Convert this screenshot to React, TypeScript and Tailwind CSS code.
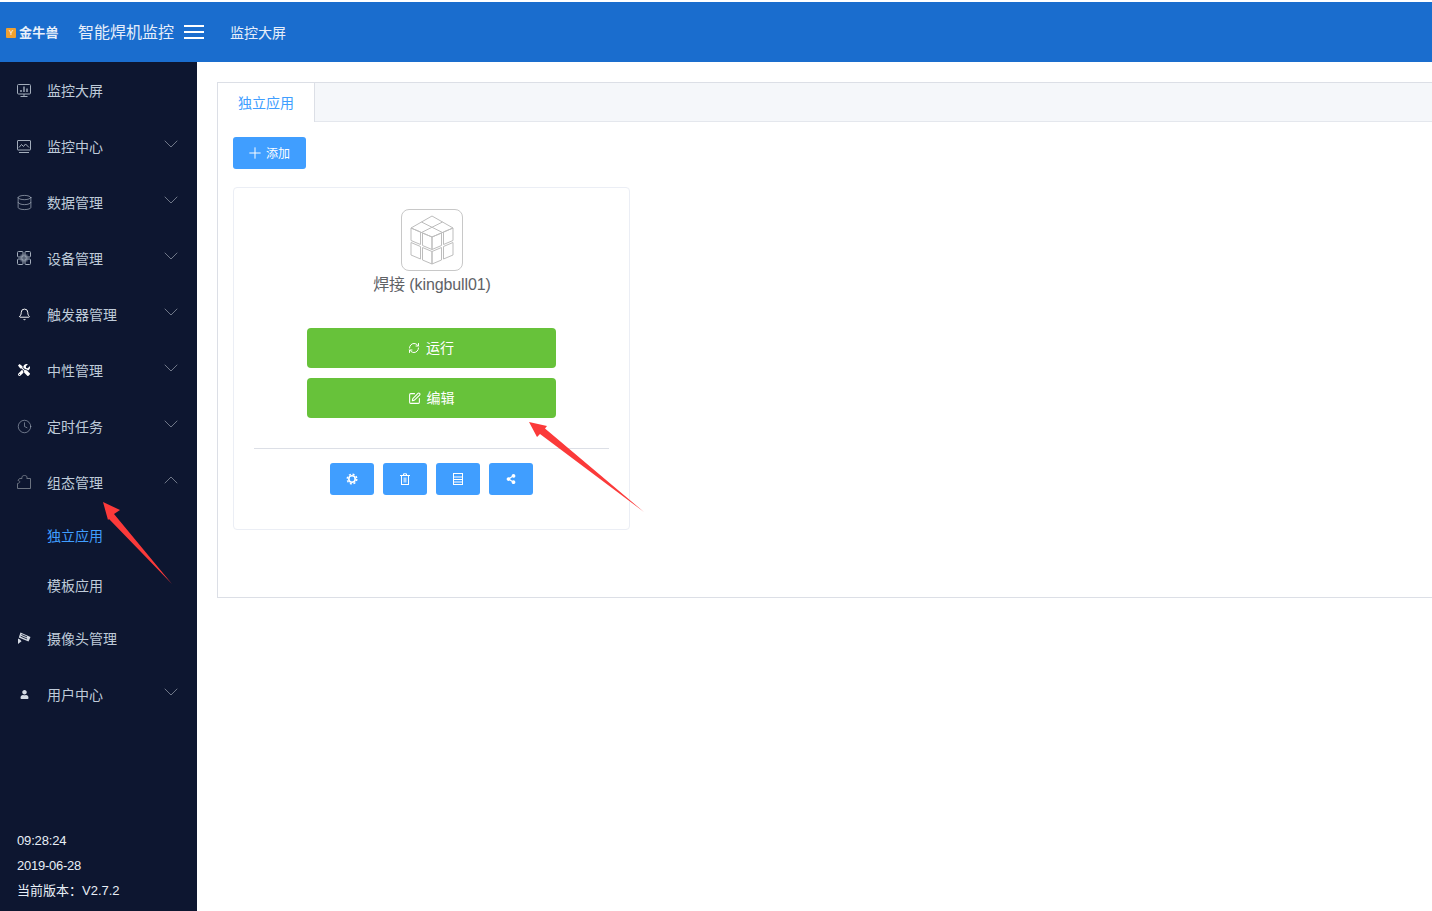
import React from 'react';
import { ChevronDown, ChevronUp, Database, Bell, Clock, RefreshCw, SquarePen, Plus } from 'lucide-react';
import { FaShareAlt, FaUser, FaTools } from 'react-icons/fa';

const ScreenIcon = () => (
  <svg width="14" height="13" viewBox="0 0 14 13" fill="none" stroke="currentColor" strokeWidth="1">
    <rect x="0.500" y="0.500" width="13" height="9.500" rx="1" />
    <path d="M3.500 12.500h7M7 10v2.500" />
    <path d="M4 8V6M7 8V2.500M10 8V4.500" strokeWidth="1.400" />
  </svg>
);

const ChartIcon = () => (
  <svg width="14" height="13" viewBox="0 0 14 13" fill="none" stroke="currentColor" strokeWidth="1">
    <rect x="0.500" y="0.500" width="13" height="9.500" rx="0.500" />
    <path d="M2 12.500h10" />
    <path d="M2 7.500l2.500-3 2 2 2-2.500 3.500 3.500" />
  </svg>
);

const GridIcon = () => (
  <svg width="14" height="14" viewBox="0 0 14 14" fill="none" stroke="currentColor" strokeWidth="1">
    <rect x="3.500" y="3.500" width="7" height="7" fill="currentColor" opacity="0.500" stroke="none" />
    <rect x="0.500" y="0.500" width="5.500" height="5.500" rx="1" />
    <rect x="8" y="0.500" width="5.500" height="5.500" rx="1" />
    <rect x="0.500" y="8" width="5.500" height="5.500" rx="1" />
    <rect x="8" y="8" width="5.500" height="5.500" rx="1" />
  </svg>
);

const PuzzleIcon = () => (
  <svg width="14" height="14" viewBox="0 0 14 14" fill="none" stroke="#6b7280" strokeWidth="1">
    <path d="M.5 13.500H13.500V3.500H9.800C10.500 1.500 9.500.5 7.500.5S4.500 1.500 5 3.500H2.500L1 5.500C3.500 6 3.500 8 .5 8.500z" />
  </svg>
);

const CameraIcon = () => (
  <svg width="14" height="13" viewBox="0 0 14 13" fill="#d5dbe4">
    <path d="M3.500 0.500L13.500 5l-2 4.500L1.800 5.500z" />
    <path d="M1 6.500l2 1 1.500 1.800L1 12z" />
    <path d="M4.500 2.500l5.500 2.400M3.600 4.200l6.500 2.800" stroke="#0d1630" strokeWidth="0.900" fill="none" />
  </svg>
);

const MenuLines = () => (
  <svg width="20" height="16" viewBox="0 0 20 16" fill="white">
    <rect y="1" width="20" height="2" />
    <rect y="7" width="20" height="2" />
    <rect y="13" width="20" height="2" />
  </svg>
);

const GearIcon = () => (
  <svg width="12" height="12" viewBox="0 0 12 12" fill="none" stroke="white">
    <circle cx="6" cy="6" r="3.200" strokeWidth="1.600" />
    <circle cx="6" cy="6" r="4.800" strokeWidth="1.400" strokeDasharray="2 1.770" />
  </svg>
);

const BinIcon = () => (
  <svg width="12" height="12" viewBox="0 0 12 12" fill="none" stroke="white" strokeWidth="1">
    <path d="M1 2.500h10M4.500 2.500V.8h3v1.700" />
    <rect x="2.500" y="2.500" width="7" height="9" />
    <rect x="4.500" y="4.500" width="3" height="5" fill="white" fillOpacity="0.600" stroke="none" />
  </svg>
);

const ListIcon = () => (
  <svg width="12" height="12" viewBox="0 0 12 12" fill="none" stroke="white" strokeWidth="1">
    <rect x="1.500" y="0.500" width="9" height="11" />
    <path d="M2 4h8M2 6.500h8M2 9h8" />
  </svg>
);

const cubeTiles = [
  'M31 7L52 19 31 28 10 19z',
  'M20.500 13L41.500 23.500M41.500 13L20.500 23.500',
  'M10 19l9.500 4v12.500l-9.500-4z',
  'M10 33.500l9.500 4V50l-9.500-4z',
  'M21.500 24l9.500 4v12.500l-9.500-4z',
  'M21.500 38.500l9.500 4V55l-9.500-4z',
  'M52 19l-9.500 4v12.500l9.500-4z',
  'M52 33.500l-9.500 4V50l9.500-4z',
  'M40.500 24L31 28v12.500l9.500-4z',
  'M40.500 38.500L31 42.500V55l9.500-4z',
];

const CubeIcon = () => (
  <svg width="62" height="62" viewBox="0 0 62 62" fill="none" stroke="#bdbdbd" strokeWidth="1">
    {cubeTiles.map((d) => (
      <path key={d} d={d} />
    ))}
  </svg>
);

const Arrow = ({ className, viewBox, points }: { className: string; viewBox: string; points: string }) => (
  <svg className={className} viewBox={viewBox} fill="#fb3a3a">
    <polygon points={points} />
  </svg>
);

type Item = { label: string; icon: React.ReactNode; chevron?: 'down' | 'up' };

const MenuRow = ({ label, icon, chevron }: Item) => (
  <div className="h-14 flex items-center pl-[17px] pr-[14px] text-[14px] text-[#bfcbd9]">
    <span className="w-[14px] h-[16px] flex items-center justify-center text-[#a3adbb] shrink-0 -mt-0.5">{icon}</span>
    <span className="ml-[16px] flex-1">{label}</span>
    {chevron === 'down' && <ChevronDown size={24} strokeWidth={1} className="text-[#6f7788] -mt-1.5" />}
    {chevron === 'up' && <ChevronUp size={24} strokeWidth={1} className="text-[#6f7788] -mt-1.5" />}
  </div>
);

const SubRow = ({ label, active }: { label: string; active?: boolean }) => (
  <div className={`h-[50px] flex items-center pl-[47px] text-[14px] ${active ? 'text-[#409eff]' : 'text-[#bfcbd9]'}`}>
    {label}
  </div>
);

const IconButton = ({ children }: { children: React.ReactNode }) => (
  <button className="w-11 h-8 rounded-[3px] bg-[#409eff] text-white flex items-center justify-center">
    {children}
  </button>
);

const GreenButton = ({ icon, label }: { icon: React.ReactNode; label: string }) => (
  <button className="w-[249px] h-10 rounded bg-[#67c23a] text-white text-[14px] flex items-center justify-center gap-[6px]">
    {icon}
    <span>{label}</span>
  </button>
);

export default function App() {
  return (
    <div className="relative w-[1432px] h-[911px] overflow-hidden bg-white pt-0.5 font-['Liberation_Sans','Noto_Sans_CJK_SC',sans-serif]">
      <header className="h-[60px] bg-[#1a6dce] flex items-center text-white">
        <div className="w-[60px] pl-1.5 flex items-center shrink-0 mt-px">
          <span className="w-[10px] h-[10px] bg-[#f0a030] rounded-[1px] flex items-center justify-center text-[7px] text-white leading-none">Y</span>
          <span className="ml-[3px] text-[13px] font-bold leading-none whitespace-nowrap text-[#e8f0fa] tracking-[0.3px]">金牛兽</span>
        </div>
        <span className="ml-[18px] text-[16px] text-[#e6eefa] mt-0.5">智能焊机监控</span>
        <span className="ml-[10px]">
          <MenuLines />
        </span>
        <span className="ml-[26px] text-[14px] text-[#e6eefa] mt-0.5">监控大屏</span>
      </header>

      <div className="flex h-[849px]">
        <aside className="w-[197px] shrink-0 bg-[#0d1630] flex flex-col pt-px">
          <MenuRow label="监控大屏" icon={<ScreenIcon />} />
          <MenuRow label="监控中心" icon={<ChartIcon />} chevron="down" />
          <MenuRow label="数据管理" icon={<Database size={17} strokeWidth={1} className="shrink-0" />} chevron="down" />
          <MenuRow label="设备管理" icon={<GridIcon />} chevron="down" />
          <MenuRow label="触发器管理" icon={<Bell size={13} strokeWidth={1.75} className="text-white" />} chevron="down" />
          <MenuRow label="中性管理" icon={<FaTools size={12} className="text-white" />} chevron="down" />
          <MenuRow label="定时任务" icon={<Clock size={15} strokeWidth={1} className="shrink-0" />} chevron="down" />
          <MenuRow label="组态管理" icon={<PuzzleIcon />} chevron="up" />
          <SubRow label="独立应用" active />
          <SubRow label="模板应用" />
          <MenuRow label="摄像头管理" icon={<CameraIcon />} />
          <MenuRow label="用户中心" icon={<FaUser size={9} className="text-[#d5dbe4]" />} chevron="down" />
          <div className="mt-auto pl-[17px] pb-[8px] text-[13px] leading-[25px] text-[#e8eef6]">
            <div className="tracking-[-0.15px]">09:28:24</div>
            <div className="tracking-[-0.25px]">2019-06-28</div>
            <div>当前版本：V2.7.2</div>
          </div>
        </aside>

        <main className="flex-1 min-w-0 pt-5 pl-5">
          <div className="h-[516px] border border-r-0 border-[#dcdfe6]">
            <div className="h-[39px] bg-[#f5f7fa] border-b border-[#e4e7ed] flex">
              <div className="w-[97px] h-[39px] pt-0.5 bg-white border-r border-[#dcdfe6] text-[14px] text-[#409eff] flex items-center justify-center">
                独立应用
              </div>
            </div>
            <div className="pt-[15px] pl-[15px]">
              <button className="w-[73px] h-8 rounded-[3px] bg-[#409eff] pr-[3px] text-white text-[12px] flex items-center justify-center gap-[2px]">
                <Plus size={18} strokeWidth={1.3} />
                <span className="mt-0.5">添加</span>
              </button>
              <div className="mt-[18px] w-[397px] h-[343px] border border-[#ebeef5] rounded flex flex-col items-center pt-[21px]">
                <div className="w-[62px] h-[62px] border border-[#c8c8c8] rounded-lg ml-px">
                  <div className="-m-px">
                    <CubeIcon />
                  </div>
                </div>
                <div className="mt-[5px] text-[16px] leading-[18px] text-[#606266] ml-px tracking-[-0.1px]">焊接 (kingbull01)</div>
                <div className="mt-[34px] flex flex-col gap-[10px] -ml-px">
                  <GreenButton icon={<RefreshCw size={12} strokeWidth={2} />} label="运行" />
                  <GreenButton icon={<SquarePen size={13} strokeWidth={2} />} label="编辑" />
                </div>
                <div className="mt-[30px] w-[355px] border-t border-[#dcdfe6]" />
                <div className="mt-[14px] flex gap-[9px] -ml-px">
                  <IconButton><GearIcon /></IconButton>
                  <IconButton><BinIcon /></IconButton>
                  <IconButton><ListIcon /></IconButton>
                  <IconButton><FaShareAlt size={10} /></IconButton>
                </div>
              </div>
            </div>
          </div>
        </main>
      </div>

      {/* red annotation arrows drawn over the screenshot */}
      <Arrow
        className="absolute left-[103px] top-[502px] w-[69px] h-[82px]"
        viewBox="0 0 69 82"
        points="0,0 17,8 11,12 69,82 6,17 5,18"
      />
      <Arrow
        className="absolute left-[529px] top-[422px] w-[115px] h-[90px]"
        viewBox="0 0 115 90"
        points="0,0 18,4 16,6.500 115,90 11,12 8,15"
      />
    </div>
  );
}
